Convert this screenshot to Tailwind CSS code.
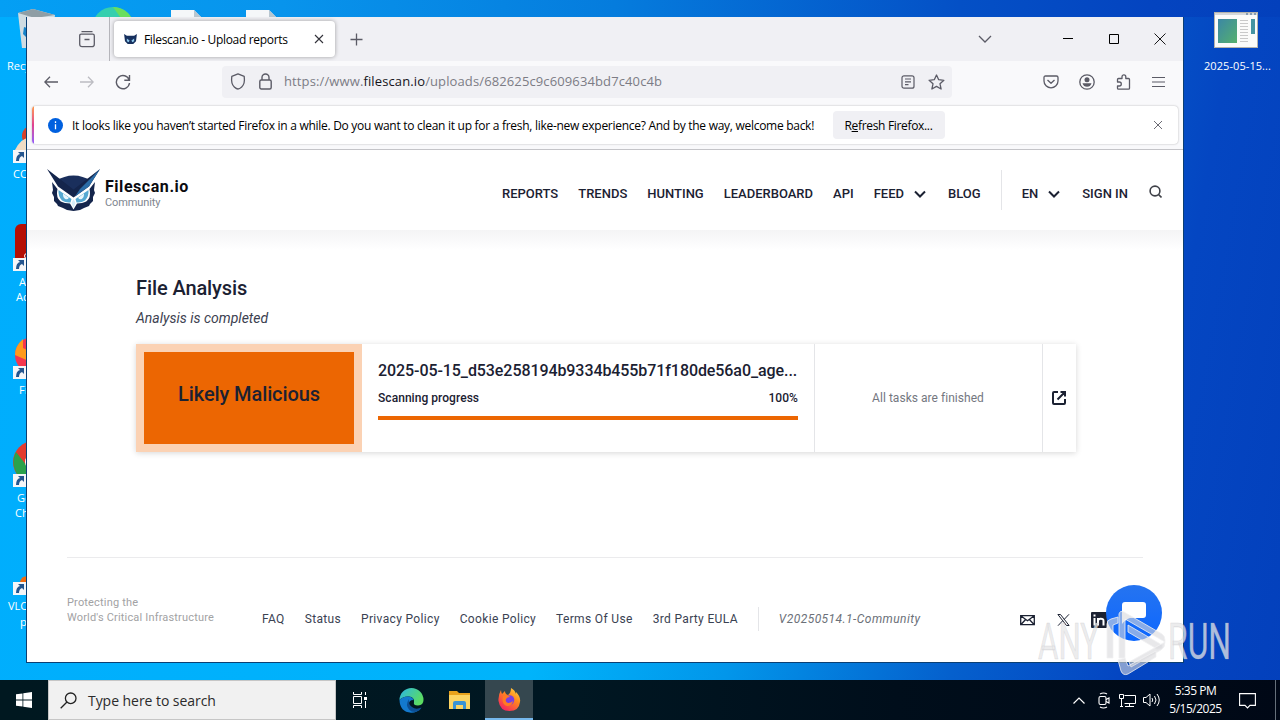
<!DOCTYPE html>
<html lang="en">
<head>
  <meta charset="UTF-8" />
  <meta name="viewport" content="width=device-width, initial-scale=1.0"/>
  <title>Filescan.io - Upload reports</title>
  <script src="https://cdn.jsdelivr.net/npm/@tailwindcss/browser@4"></script>
</head>
<body class="relative w-[1280px] h-[720px] overflow-hidden bg-[linear-gradient(100deg,#00adfd_0%,#00b4fb_46%,#0296ea_60%,#0560cd_76%,#0446c2_88%,#0340bc_100%)] font-['Open_Sans',sans-serif] text-black">

  <!-- wallpaper: darker towards the top -->
  <div class="absolute inset-x-0 top-0 h-[17px] bg-[linear-gradient(90deg,#049ff4_0%,#0894ec_22%,#057cdd_48%,#0450c6_75%,#0444c0_90%,#0340bc_100%)]"></div>

  <!-- desktop icons -->
  <svg class="absolute left-0 top-0" width="300" height="60" viewBox="0 0 300 60">
    <path d="M18 13l15-4 22 6-4 33H22z" fill="#cfdce2"/>
    <path d="M18 13l15-4 22 6-20 3z" fill="#8f9ea5"/>
    <path d="M24 27l6 2-3 9-4-4z" fill="#1583c9"/>
    <circle cx="113" cy="28" r="21" fill="#35cfae"/>
    <path d="M113 7a21 21 0 0 1 20 14h-10z" fill="#6ade5e"/>
    <path d="M171 10h23l8 8v30h-31zM246 10h23l8 8v30h-31z" fill="#f5f7f9"/>
    <path d="M194 10v8h8zM269 10v8h8z" fill="#b9c6cf"/>
  </svg>
  <p class="absolute left-[7px] top-[58px] text-[11px] leading-4 text-white">Recycle</p>

  <svg class="absolute left-[13px] top-[120px]" width="30" height="50" viewBox="0 0 30 50">
    <circle cx="20" cy="16" r="11" fill="#d6402b"/>
    <path d="M2 30q6-12 14-12v16H2z" fill="#f0dcc4"/>
    <path d="M0 30h13v13H0z" fill="#f4f6f8"/>
    <path d="M3 41q0-6 4-7l-2-2h6v6l-2-2q-3 1-3 5z" fill="#24568f"/>
  </svg>
  <p class="absolute left-[13px] top-[166px] text-[11px] leading-4 text-white">CCleaner</p>

  <svg class="absolute left-[13px] top-[224px]" width="40" height="50" viewBox="0 0 40 50">
    <rect x="2" width="40" height="44" rx="6" fill="#b50f05"/>
    <circle cx="14" cy="32" r="2.500" fill="none" stroke="#fff"/>
    <path d="M0 34h13v13H0z" fill="#f4f6f8"/>
    <path d="M3 45q0-6 4-7l-2-2h6v6l-2-2q-3 1-3 5z" fill="#24568f"/>
  </svg>
  <p class="absolute left-[19px] top-[274px] text-[11px] leading-[15px] text-white">A</p>
  <p class="absolute left-[16px] top-[289px] text-[11px] leading-[15px] text-white">Acrobat</p>

  <svg class="absolute left-[13px] top-[336px]" width="40" height="50" viewBox="0 0 40 50">
    <circle cx="20" cy="19" r="18" fill="#f4374f"/>
    <path d="M2 19q0-9 8-16v9l8 4v10z" fill="#ff9a1c"/>
    <path d="M0 30h13v13H0z" fill="#f4f6f8"/>
    <path d="M3 41q0-6 4-7l-2-2h6v6l-2-2q-3 1-3 5z" fill="#24568f"/>
  </svg>
  <p class="absolute left-[19px] top-[382px] text-[11px] leading-4 text-white">Firefox</p>

  <svg class="absolute left-[13px] top-[440px]" width="44" height="50" viewBox="0 0 44 50">
    <circle cx="21" cy="22" r="21" fill="#e33b2e"/>
    <path d="M3 12A21 21 0 0 0 20 43l-6-17z" fill="#2aa24b"/>
    <circle cx="21" cy="22" r="9" fill="#fff"/>
    <path d="M0 34h13v13H0z" fill="#f4f6f8"/>
    <path d="M3 45q0-6 4-7l-2-2h6v6l-2-2q-3 1-3 5z" fill="#24568f"/>
  </svg>
  <p class="absolute left-[17px] top-[490px] text-[11px] leading-[15px] text-white">Google</p>
  <p class="absolute left-[15px] top-[505px] text-[11px] leading-[15px] text-white">Chrome</p>

  <svg class="absolute left-[13px] top-[560px]" width="30" height="50" viewBox="0 0 30 50">
    <path d="M7 22q1-6 8-6v16H7z" fill="#f26a0b"/>
    <path d="M0 22h13v13H0z" fill="#f4f6f8"/>
    <path d="M3 33q0-6 4-7l-2-2h6v6l-2-2q-3 1-3 5z" fill="#24568f"/>
  </svg>
  <p class="absolute left-[8px] top-[598px] text-[11px] leading-4 text-white">VLC</p>
  <p class="absolute left-[20px] top-[614px] text-[11px] leading-4 text-white">player</p>

  <svg class="absolute left-[1214px] top-[12px]" width="44" height="36" viewBox="0 0 44 36">
    <defs>
      <linearGradient id="thumb" x1="0" y1="0" x2="1" y2="1"><stop offset="0" stop-color="#3b87a5"/><stop offset="1" stop-color="#55b06e"/></linearGradient>
    </defs>
    <rect x=".5" y=".5" width="43" height="35" fill="#fbfbfa" stroke="#b5b3ac"/>
    <path d="M1 2h42" stroke="#d5d8da" stroke-width="2"/>
    <path d="M32 2h2m2 0h2m2 0h2" stroke="#3a628b"/>
    <rect x="4" y="7" width="19" height="24" fill="url(#thumb)"/>
    <path d="M26 8.500h8M26 11.500h8M26 14.500h8M26 17.500h8M26 20.500h8M26 23.500h8M26 26.500h8M26 29.500h8" stroke="#c9c9c9"/>
    <rect x="37" y="7" width="4" height="15" fill="#4594a2"/>
  </svg>
  <p class="absolute left-[1204px] top-[58px] text-[11px] leading-4 tracking-[0.07px] whitespace-nowrap text-white">2025-05-15...</p>

  <!-- browser window -->
  <div class="absolute left-[26px] top-[17px] w-[1158px] h-[646px] border border-t-0 border-[#0b3f73] bg-white flex flex-col">

    <!-- tab strip -->
    <div class="h-11 shrink-0 bg-[#f0f0f4] flex items-center">
      <div class="w-[83px] h-full border-r border-[#b5b5bb] flex items-center justify-end pr-[13px]">
        <svg width="18" height="18" viewBox="0 0 18 18" fill="none" stroke="#5b5b66" stroke-width="1.300">
          <path d="M3.500 1.700h11M1.700 5.700q0-1.500 1.500-1.500h11.600q1.500 0 1.500 1.500v8.500q0 2.500-2.500 2.500H4.200q-2.500 0-2.500-2.500zM6.500 9.500h5"/>
        </svg>
      </div>
      <div class="ml-[4px] w-[221px] h-9 rounded bg-white shadow-[0_0_4px_rgba(0,0,0,0.35)] flex items-center pl-[10px] pr-[11px]">
        <svg width="13" height="11" viewBox="0 0 14 12">
          <path d="M0 0l3 2h8l3-2-1 8-3 3H4L1 8z" fill="#16305e"/>
          <path d="M3 5l3 2-1 2-2-1zM11 5L8 7l1 2 2-1z" fill="#8cc6ea"/>
        </svg>
        <span class="ml-[7px] mt-[2px] grow text-[12px] tracking-[-0.32px] whitespace-nowrap">Filescan.io - Upload reports</span>
        <svg width="10" height="10" viewBox="0 0 10 10" stroke="#33333b" stroke-width="1.100"><path d="M1 1l8 8M9 1L1 9"/></svg>
      </div>
      <svg class="ml-[15px]" width="13" height="13" viewBox="0 0 13 13" stroke="#5b5b66" stroke-width="1.300"><path d="M6.500 .5v12M.5 6.500h12"/></svg>
      <div class="ml-auto flex items-center pr-[17px]">
        <svg class="mr-[71px]" width="14" height="8" viewBox="0 0 14 8" fill="none" stroke="#5b5b66" stroke-width="1.300"><path d="M1 1l6 6 6-6"/></svg>
        <svg class="mr-[36px]" width="10" height="10" viewBox="0 0 10 10" stroke="#000"><path d="M0 4.500h10"/></svg>
        <svg class="mr-[35px]" width="10" height="10" viewBox="0 0 10 10" fill="none" stroke="#000"><path d="M.5 .5h9v9h-9z"/></svg>
        <svg width="12" height="12" viewBox="0 0 12 12" stroke="#000" stroke-width=".9"><path d="M.5 .5l11 11M11.500 .5l-11 11"/></svg>
      </div>
    </div>

    <!-- toolbar -->
    <div class="h-[41px] shrink-0 bg-[#f9f9fb] flex items-center text-[#5b5b66]">
      <svg class="ml-[17px]" width="14" height="12" viewBox="0 0 14 12" fill="none" stroke="#5b5b66" stroke-width="1.300"><path d="M6 .7L.8 6 6 11.300M1 6h13"/></svg>
      <svg class="ml-[22px]" width="14" height="12" viewBox="0 0 14 12" fill="none" stroke="#bcbcc2" stroke-width="1.300"><path d="M8 .7L13.200 6 8 11.300M13 6H0"/></svg>
      <svg class="ml-[21px]" width="16" height="16" viewBox="0 0 16 16" fill="none" stroke="#5b5b66" stroke-width="1.400"><path d="M14.200 6A6.600 6.600 0 1 0 14.500 9M14.500 1v5.300H9.300"/></svg>
      <div class="ml-[91px] w-[730px] h-8 rounded bg-[#f0f0f4] flex items-center pl-2 pr-[7px]">
        <svg width="16" height="17" viewBox="0 0 16 17" fill="none" stroke="#5b5b66" stroke-width="1.300"><path d="M8 .9l6.200 2.500q1 7.500-2.500 10.600Q9.500 16 8 16t-3.700-2Q.8 10.900 1.800 3.400z" stroke-linejoin="round"/></svg>
        <svg class="ml-[13px]" width="13" height="17" viewBox="0 0 13 17" fill="none" stroke="#5b5b66" stroke-width="1.400"><rect x=".8" y="7" width="11.400" height="9" rx="1.500"/><path d="M3 7V4.500a3.500 3.500 0 0 1 7 0V7"/></svg>
        <span class="ml-[12px] mt-px grow text-[13px] tracking-[0.12px] whitespace-nowrap text-[#7c7c85]">https://www.<span class="text-[#15141a]">filescan.io</span>/uploads/682625c9c609634bd7c40c4b</span>
        <svg width="14" height="14" viewBox="0 0 14 14" fill="none" stroke="#5b5b66" stroke-width="1.200"><rect x="1" y=".8" width="12" height="12.400" rx="2"/><path d="M4 4h6M4 6.800h6M4 9.600h3.500"/></svg>
        <svg class="ml-[13px]" width="17" height="16" viewBox="0 0 17 16" fill="none" stroke="#5b5b66" stroke-width="1.300" stroke-linejoin="round"><path d="M8.500 1l2.200 4.700 5.200.6-3.900 3.500 1.100 5.200-4.600-2.600L3.900 15 5 9.800 1.100 6.300l5.200-.6z"/></svg>
      </div>
      <div class="ml-auto flex items-center pr-[18px]">
        <svg class="mr-[20px]" width="16" height="14" viewBox="0 0 16 14" fill="none" stroke="#5b5b66" stroke-width="1.300" stroke-linejoin="round"><path d="M2.500 1h11q1.500 0 1.500 1.500V6a7 6.800 0 0 1-14 0V2.500Q1 1 2.500 1zM4.500 5L8 8.300 11.500 5"/></svg>
        <svg class="mr-[21px]" width="16" height="16" viewBox="0 0 16 16"><circle cx="8" cy="8" r="7.200" fill="none" stroke="#5b5b66" stroke-width="1.300"/><circle cx="8" cy="5.700" r="2.500" fill="#5b5b66"/><path d="M3.500 9.200h9Q11.500 12.800 8 12.800T3.500 9.200z" fill="#5b5b66"/></svg>
        <svg class="mr-[21px]" width="15" height="16" viewBox="0 0 15 16" fill="none" stroke="#5b5b66" stroke-width="1.300" stroke-linejoin="round"><path d="M1.500 8V5.500Q1.500 4.500 2.500 4.500H6V2.800a1.900 1.900 0 0 1 3.800 0v1.700h2.700q1 0 1 1v8.700q0 1-1 1H2.500q-1 0-1-1V12h1.800a2 2 0 0 0 0-4z"/></svg>
        <svg width="13" height="12" viewBox="0 0 13 12" stroke="#5b5b66" stroke-width="1.200"><path d="M0 1.500h13M0 6h13M0 10.500h13"/></svg>
      </div>
    </div>

    <!-- notification bar -->
    <div class="h-[48px] shrink-0 bg-[#f9f9fb] border-b border-[#c4c4c8] pt-[4px] pl-[5px] pr-[5px]">
      <div class="h-[38px] rounded-sm bg-white shadow-[0_0_2px_rgba(0,0,0,0.3)] flex items-center overflow-hidden">
        <div class="w-[2px] h-full bg-linear-to-b from-[#ff9a44] via-[#e0408f] to-[#9059ff]"></div>
        <svg class="ml-[14px]" width="15" height="15" viewBox="0 0 15 15"><circle cx="7.500" cy="7.500" r="7.500" fill="#0060df"/><path d="M7.500 3.300v1.600M7.500 6.300v5" stroke="#fff" stroke-width="1.300"/></svg>
        <span class="ml-[9px] mt-[2px] w-[743px] text-[12px] tracking-[-0.282px] whitespace-nowrap">It looks like you haven’t started Firefox in a while. Do you want to clean it up for a fresh, like-new experience? And by the way, welcome back!</span>
        <button class="ml-[18px] w-[112px] h-7 rounded bg-[#f0f0f4] pt-px pr-px text-[12px] tracking-[-0.33px]">R<span class="underline">e</span>fresh Firefox...</button>
        <svg class="ml-auto mr-[15px]" width="10" height="10" viewBox="0 0 10 10" stroke="#6b6b74"><path d="M1 1l8 8M9 1L1 9"/></svg>
      </div>
    </div>

    <!-- site header -->
    <header class="h-20 shrink-0 bg-white flex items-center pl-5 pr-[21px] font-['Roboto',sans-serif] text-[13px] font-medium text-[#1b2132] whitespace-nowrap">
      <svg width="53" height="43" viewBox="0 0 53 43">
        <path d="M9 12Q17 6.500 26.500 6.500T44 12L26.500 24z" fill="#1a2f5c"/>
        <path d="M0 0L26.500 20.500 53 0 42 17.500 26.500 28.500 11 17.500z" fill="#14254c"/>
        <path d="M53 0L42 17.500 28 27.500 33 20z" fill="#2a6ca6"/>
        <path d="M5 13l5.500 7q-2.500 12 7.500 14l5 .5 3.500 6 3.500-6 5-.5q10-2 7.500-14L48 13l-1 8 1 3-2 4v4l-3 3-1 2-5 2-4 2-6.500 1-6.500-1-4-2-5-2-1-2-3-3v-4l-2-4 1-3z" fill="#14254c"/>
        <path d="M11.500 21l13 9-1 3.500q-5 .5-8.500-2-4-4-3.500-10.500zM41.500 21l-13 9 1 3.500q5 .5 8.500-2 4-4 3.500-10.500z" fill="#56a9d2"/>
        <path d="M16 24.500l6 4.200q-1.500 2.300-3.800 1.300-2.400-1.500-2.200-5.500zM37 24.500l-6 4.200q1.500 2.300 3.800 1.300 2.400-1.500 2.200-5.500z" fill="#e9f6fc"/>
        <path d="M26.500 30l2 4-2 5-2-5z" fill="#d5ecf8"/>
      </svg>
      <div class="ml-[5px] pt-[6px]">
        <p class="text-[16px] leading-[18px] font-bold text-[#0b0b10] tracking-[0.55px]">Filescan.io</p>
        <p class="text-[11px] leading-[13px] font-normal text-[#80868f] tracking-[-0.1px]">Community</p>
      </div>
      <nav class="ml-auto h-full flex items-center gap-5 pt-[7px]">
        <a>REPORTS</a>
        <a>TRENDS</a>
        <a>HUNTING</a>
        <a>LEADERBOARD</a>
        <a>API</a>
        <a class="flex items-center gap-[10px] pr-[2px]">FEED
          <svg width="12" height="8" viewBox="0 0 12 8" fill="none" stroke="#1b2132" stroke-width="2"><path d="M1 1.500l5 5 5-5"/></svg>
        </a>
        <a>BLOG</a>
      </nav>
      <div class="ml-5 w-px h-10 bg-[#e4e5e8]"></div>
      <div class="ml-5 h-full flex items-center pt-[7px]">
        <a class="flex items-center gap-[10px]">EN
          <svg width="12" height="8" viewBox="0 0 12 8" fill="none" stroke="#1b2132" stroke-width="2"><path d="M1 1.500l5 5 5-5"/></svg>
        </a>
        <a class="ml-[22px]">SIGN IN</a>
        <svg class="ml-[21px] mb-[5px]" width="13" height="13" viewBox="0 0 13 13" fill="none" stroke="#3f4148" stroke-width="1.600"><circle cx="6" cy="6" r="4.900"/><path d="M9.500 9.500l3 3"/></svg>
      </div>
    </header>

    <!-- page -->
    <main class="grow flex flex-col bg-[linear-gradient(180deg,#f4f4f5_0px,#ffffff_20px)] font-['Roboto',sans-serif] text-[#1b2132]">
      <h1 class="mt-[44px] ml-[109px] text-[20px] leading-7 font-medium tracking-[-0.1px]">File Analysis</h1>
      <p class="mt-[6px] ml-[109px] text-[14px] leading-5 italic text-[#3c4150]">Analysis is completed</p>

      <section class="mt-4 ml-[109px] w-[940px] h-[108px] bg-white shadow-[0_1px_6px_rgba(0,0,0,0.16)] flex">
        <div class="w-[226px] border-8 border-[#fbd2b4] bg-[#ec6602] flex items-center justify-center pb-[8px] text-[20px] font-medium tracking-[-0.1px] whitespace-nowrap">Likely Malicious</div>
        <div class="w-[452px] px-4 pt-4">
          <p class="text-[16px] leading-[22px] font-medium tracking-[-0.08px] whitespace-nowrap">2025-05-15_d53e258194b9334b455b71f180de56a0_age...</p>
          <div class="mt-2 flex justify-between text-[12px] leading-4 font-medium tracking-[0.05px]">
            <span>Scanning progress</span>
            <span>100%</span>
          </div>
          <div class="mt-[10px] h-1 bg-[#ec6602]"></div>
        </div>
        <div class="w-[229px] border-x border-[#e4e5e8] flex items-center justify-center pr-px text-[12px] tracking-[0.04px] text-[#74777f]">All tasks are finished</div>
        <div class="grow flex items-center justify-center pr-px">
          <svg width="16" height="16" viewBox="0 0 16 16" fill="none" stroke="#1b2132" stroke-width="2"><path d="M7 2H3Q2 2 2 3v10q0 1 1 1h10q1 0 1-1V9M9.500 2H14v4.500M14 2L6.500 9.500"/></svg>
        </div>
      </section>

      <footer class="mt-[105px] mx-10 border-t border-[#ebebed] flex text-[12px] text-[#3a4252]">
        <p class="mt-[37px] w-[195px] text-[11px] leading-[15px] text-[#a2a2a4] tracking-[0.17px]">Protecting the<br>World's Critical Infrastructure</p>
        <nav class="mt-[48px] h-[26px] flex items-center gap-5 tracking-[0.34px] whitespace-nowrap">
          <a>FAQ</a>
          <a>Status</a>
          <a>Privacy Policy</a>
          <a>Cookie Policy</a>
          <a>Terms Of Use</a>
          <a>3rd Party EULA</a>
          <span class="h-6 border-l border-[#e4e5e8]"></span>
          <span class="italic text-[#6b7078] tracking-[0.45px]">V20250514.1-Community</span>
        </nav>
        <div class="mt-[54px] ml-auto mr-[36px] flex items-start">
          <svg class="mr-[22px] mt-[2px]" width="15" height="12" viewBox="0 0 15 12" fill="none" stroke="#1b2132" stroke-width="1.300"><path d="M.7 1.700h13.600v9H.7zM.7 1.700l6.800 5 6.800-5M.7 10.700l4.700-5M14.300 10.700l-4.700-5"/></svg>
          <svg class="mr-[21px] mt-[2px]" width="13" height="12" viewBox="0 0 13 12" fill="none" stroke="#1b2132"><path d="M.9 .5h2.600l8.600 11H9.500zM12 .3L7.300 5.300M5.600 6.800L1 11.700"/></svg>
          <svg width="16" height="16" viewBox="0 0 16 16"><rect width="16" height="16" rx="1" fill="#1b2132"/><path d="M3.500 6v7.500M3.500 2.500v2M7 13.500V6M7 9q0-2.300 2.800-2.300T12.500 9v4.500" fill="none" stroke="#fff" stroke-width="2"/></svg>
        </div>
      </footer>
    </main>
  </div>

  <!-- chat bubble -->
  <div class="absolute left-[1106px] top-[585px] size-14 rounded-full bg-linear-to-b from-[#2574f0] to-[#0a66ff] flex items-center justify-center">
    <svg width="26" height="24" viewBox="0 0 26 24"><path d="M4 1h18q3 0 3 3v10q0 3-3 3H9q-4 1-8 6V4q0-3 3-3z" fill="#fff"/></svg>
  </div>

  <!-- watermark -->
  <svg class="absolute left-[1030px] top-[600px]" width="240" height="76" viewBox="0 0 240 76">
    <g fill="#e6e6e8" fill-opacity=".75" stroke="#b9b9bd" stroke-opacity=".45" stroke-width=".6" font-family="Roboto" font-size="50">
      <text x="8" y="59" textLength="61" lengthAdjust="spacingAndGlyphs">ANY</text>
      <text x="138" y="59" textLength="63" lengthAdjust="spacingAndGlyphs">RUN</text>
    </g>
    <g fill="#d9d9dc" fill-opacity=".6" stroke="#f1f1f3" stroke-opacity=".8" stroke-linejoin="round">
      <path d="M77 58V24q0-4 4-5l7-2v6l-5 2v33z"/>
      <path d="M89 58V14q1-4 5-2l38 22q3 2 3 6v2L95 19v39z"/>
      <path d="M98 32v-7l34 20v3l-5 1z"/>
      <path d="M99 62l36-20q0 6-4 8l-30 17z"/>
      <path d="M88 60l7-2 3 8 28-15v6L98 74q-5 2-7-3z"/>
    </g>
  </svg>

  <!-- taskbar -->
  <div class="absolute inset-x-0 bottom-0 h-10 bg-[linear-gradient(90deg,#001820_0%,#001722_45%,#000e1b_70%,#000816_100%)] flex items-stretch text-white">
    <div class="w-12 flex items-center justify-center">
      <svg width="16" height="16" viewBox="0 0 16 16" fill="#fff"><path d="M0 2.300l6.500-.9v6.200H0zM7.300 1.300L16 0v7.600H7.300zM0 8.400h6.500v6.200L0 13.700zM7.300 8.400H16V16l-8.700-1.300z"/></svg>
    </div>
    <div class="w-[288px] bg-[#f1f1f1] border border-[#c6c6c6] flex items-center pl-[11px]">
      <svg width="17" height="17" viewBox="0 0 17 17" fill="none" stroke="#222" stroke-width="1.300"><circle cx="10.700" cy="6.300" r="5.300"/><path d="M7 10L.7 16.300"/></svg>
      <span class="ml-[11px] text-[14px] tracking-[-0.05px] text-[#2b2b2b] whitespace-nowrap">Type here to search</span>
    </div>
    <div class="w-12 flex items-center justify-center pr-[2px]">
      <svg width="18" height="16" viewBox="0 0 18 16" fill="none" stroke="#fff"><path d="M3.500 4.500h8v7h-8zM3.500 0v2.500h8V0M3.500 16v-2.500h8V16M15.500 0v3M15.500 9v7M14 6.500h3" /><path d="M15.500 5v3" stroke-width="3"/></svg>
    </div>
    <div class="w-[54px] flex items-center justify-center">
      <svg width="25" height="25" viewBox="0 0 25 25">
        <defs>
          <linearGradient id="edge" x1="0" y1="0" x2="1" y2=".5"><stop offset="0" stop-color="#2bb5e6"/><stop offset="1" stop-color="#5bdc62"/></linearGradient>
        </defs>
        <path d="M.5 12A12 12 0 0 1 24.500 12Q24.500 17 19 17.500 14 17.500 15 14 15.500 9 10 8.500 4 8 .5 12z" fill="url(#edge)"/>
        <path d="M.5 12Q4 8 10 8.500 14 9 14.500 12 9.500 12 10 17 11 22 18 22 20 22 22 20 18 25 12 24.700 1 24 .5 12z" fill="#1379ce"/>
        <path d="M10 11Q6 17 10 21.500 12 24 16 24 21 23 22.500 19.500 17 22 13 19 9 16 10 11z" fill="#0c4f94"/>
      </svg>
    </div>
    <div class="w-[47px] flex items-center justify-center pr-[3px]">
      <svg width="22" height="19" viewBox="0 0 22 19"><path d="M0 0h8l2 2h11v16H0z" fill="#e8a21c"/><path d="M0 4h21v14H0z" fill="#fcd462"/><path d="M4 18v-6q0-2 2-2h9q2 0 2 2v6h-3v-4H7v4z" fill="#3a93d4"/></svg>
    </div>
    <div class="w-12 bg-[#35474f] border-b-2 border-[#76b9ed] flex items-center justify-center">
      <svg width="23" height="24" viewBox="0 0 23 24">
        <defs>
          <linearGradient id="fox" x1="1" y1="0" x2=".3" y2="1"><stop offset="0" stop-color="#ffe14a"/><stop offset=".45" stop-color="#ff8a1d"/><stop offset="1" stop-color="#f5255f"/></linearGradient>
        </defs>
        <path d="M3 3q0 2 1 4l3-3q0 3 3 4 3-2 3-7 4 2 5 6 0-1 0-2 5 5 4 10-1 9-10.500 9T.5 14Q0 8 3 3z" fill="url(#fox)"/>
        <circle cx="11.500" cy="13" r="4.800" fill="#7a3fe0"/>
        <path d="M5 9q4-2 7 1-3 0-4 2-1 3 2 4 3 0 5-2-1 5-6 5-6-2-4-10z" fill="#ff7a22"/>
      </svg>
    </div>
    <div class="ml-auto flex items-center">
      <svg class="mr-[13px]" width="12" height="7" viewBox="0 0 12 7" fill="none" stroke="#fff" stroke-width="1.200"><path d="M.5 6.500L6 1l5.500 5.500"/></svg>
      <svg class="mr-[9px]" width="12" height="17" viewBox="0 0 12 17" fill="none" stroke="#fff" stroke-width="1.100"><rect x="1" y="4.500" width="7" height="8" rx="1.500"/><path d="M8 7.500l3-1.500v5L8 9.500M2 2q3.500-2 7 0M2 15q3.500 2 7 0"/></svg>
      <svg class="mr-[7px]" width="17" height="15" viewBox="0 0 17 15" fill="none" stroke="#fff"><path d="M5.500 2.500h11v8h-11M10.500 10.500v3M6 13.500h9M.5 1.500h4v4h-4zM2.500 5.500v8M1 13.500h3"/></svg>
      <svg class="mr-[8px]" width="18" height="16" viewBox="0 0 18 16" fill="none" stroke="#fff"><path d="M.5 5.500h2.500l4-3.500v12l-4-3.500H.5zM9 6q1.500 2 0 4M11.500 4q3 4 0 8M14 2q4.500 6 0 12"/></svg>
      <div class="w-[53px] text-center text-[12px] leading-[18px] tracking-[-0.5px] whitespace-nowrap">
        <p>5:35 PM</p>
        <p>5/15/2025</p>
      </div>
      <svg class="ml-[17px] mr-[19px]" width="17" height="17" viewBox="0 0 17 17" fill="none" stroke="#fff" stroke-width="1.100"><path d="M.6 1.600h15.800v11.800H11L8.500 16 6 13.400H.6z"/></svg>
      <div class="w-[5px] h-full border-l border-[#66707a]"></div>
    </div>
  </div>
</body>
</html>
